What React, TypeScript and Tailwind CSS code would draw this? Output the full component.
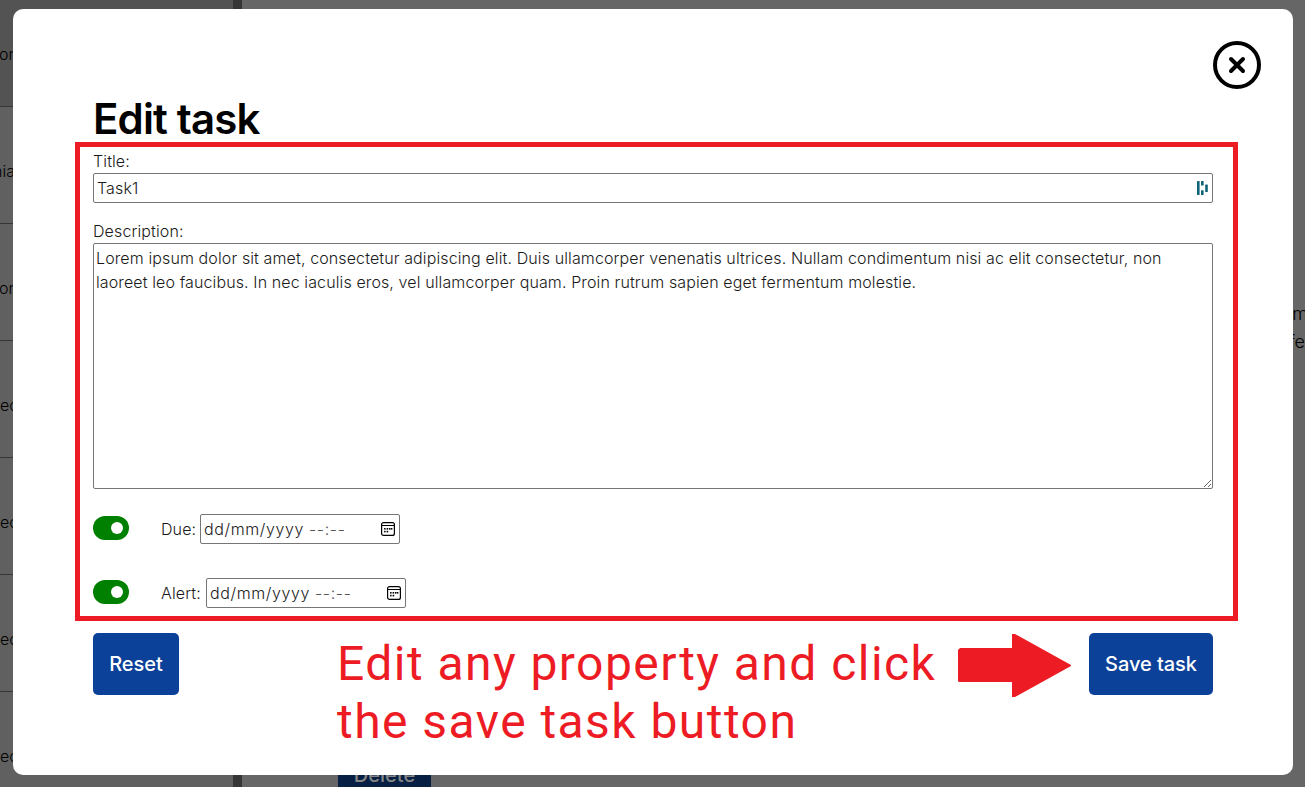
import React from "react";

const sidebarItems = ["on", "nia", "on", "ec", "ec", "ec", "ec"];

function Backdrop() {
  return (
    <div className="flex h-full w-full overflow-hidden bg-[#666666]">
      <div className="-mt-[10px] flex w-[233px] shrink-0 flex-col">
        {sidebarItems.map((text, i) => (
          <div
            key={i}
            className={
              "flex h-[117px] shrink-0 items-center border-b border-[#363636] pt-[11px] text-base font-light text-black " +
              (i === 0 ? "bg-[#535353]" : "bg-[#606060]")
            }
          >
            <span className={i === 1 ? "-ml-[7px]" : i === 0 || i === 2 ? "-ml-[1px]" : "ml-0"}>{text}</span>
          </div>
        ))}
      </div>
      <div className="w-[9px] shrink-0 bg-[#363636]" />
      <div className="flex min-w-0 flex-1 flex-col justify-between">
        <div className="mt-[300px] flex flex-col items-end text-[18px] leading-7 font-light whitespace-nowrap text-black">
          <span className="-mr-[3px]">m</span>
          <span>fe</span>
        </div>
        <div className="-mb-[19px] ml-24 flex h-[62px] w-[93px] items-center justify-center rounded bg-[#061f43] text-xl font-medium text-[#858585]">
          Delete
        </div>
      </div>
    </div>
  );
}

function CloseIcon() {
  return (
    <svg width="48" height="48" viewBox="0 0 48 48" fill="none" stroke="#000">
      <circle cx="24" cy="24" r="22" strokeWidth="4" />
      <path d="M18 18L30 30M30 18L18 30" strokeWidth="4" strokeLinecap="round" />
    </svg>
  );
}

function PasswordManagerIcon() {
  return (
    <svg width="12" height="16" viewBox="0 0 12 16" fill="#0e6377">
      <rect x="0" y="1" width="2.6" height="14" rx=".4" />
      <rect x="4" y="1" width="2.6" height="4.6" rx=".6" />
      <rect x="4" y="10.2" width="2.6" height="4.8" rx=".6" />
      <rect x="8.2" y="4.6" width="2.6" height="7.4" rx=".6" />
    </svg>
  );
}

function CalendarIcon() {
  return (
    <svg width="14" height="14" viewBox="0 0 14 14" fill="none" stroke="#000">
      <rect x=".6" y=".6" width="12.8" height="12.8" rx="2" strokeWidth="1.2" />
      <path d="M1 3.5H13" />
      <g fill="#000" stroke="none">
        <rect x="5.6" y="6" width="1.6" height="1.6" />
        <rect x="8" y="6" width="1.6" height="1.6" />
        <rect x="10" y="6" width="1.4" height="1.6" />
        <rect x="3.1" y="6" width="1.5" height="1.6" />
        <rect x="3.1" y="8.8" width="1.5" height="1.6" />
        <rect x="5.6" y="8.8" width="1.6" height="1.6" />
      </g>
    </svg>
  );
}

function Toggle() {
  return (
    <div className="flex h-6 w-9 items-center justify-end rounded-full bg-[#008000] pr-1.5">
      <div className="size-3 rounded-full bg-white" />
    </div>
  );
}

function DateRow({ label, gap }: { label: string; gap: string }) {
  return (
    <div className="flex h-[30px] items-center">
      <div className="-mt-0.5 mr-8">
        <Toggle />
      </div>
      <span className={gap}>{label}</span>
      <div className="flex h-[30px] w-[200px] items-center justify-between rounded-[2px] border border-[#767676] pr-1 pl-[3px]">
        <span className="tracking-[0.6px] whitespace-pre">
          dd/mm/yyyy <span className="text-[#555]">--:--</span>
        </span>
        <CalendarIcon />
      </div>
    </div>
  );
}

const buttonClass =
  "flex h-[62px] items-center justify-center rounded-[5px] bg-[#0c419a] text-xl tracking-[-0.05px] font-medium text-white";

export default function App() {
  return (
    <div className="relative h-[787px] w-[1305px] overflow-hidden font-['Inter',sans-serif]">
      <Backdrop />

      <div className="absolute top-[9px] left-[13px] flex h-[766px] w-[1280px] flex-col rounded-[10px] bg-white px-20 pt-8 text-base leading-6 font-light tracking-[0.115px] text-[#1a1a1a]">
        <div className="-mr-12 flex h-12 justify-end">
          <CloseIcon />
        </div>
        <h1 className="flex h-[60px] items-center text-[42px] leading-[60px] font-semibold tracking-[-0.85px] text-black">
          Edit task
        </h1>
        <label className="flex h-6 items-center">Title:</label>
        <div className="flex h-[30px] items-center justify-between rounded-[2px] border border-[#767676] pr-[3px] pl-[3px]">
          <span>Task1</span>
          <PasswordManagerIcon />
        </div>
        <label className="mt-4 flex h-6 items-center">Description:</label>
        <textarea
          className="h-[246px] w-full shrink-0 rounded-[2px] border border-[#767676] p-0.5 leading-6 tracking-[0.115px] outline-none"
          defaultValue="Lorem ipsum dolor sit amet, consectetur adipiscing elit. Duis ullamcorper venenatis ultrices. Nullam condimentum nisi ac elit consectetur, non laoreet leo faucibus. In nec iaculis eros, vel ullamcorper quam. Proin rutrum sapien eget fermentum molestie."
        />
        <div className="mt-[25px] flex flex-col gap-[34px]">
          <DateRow label="Due:" gap="w-[39px]" />
          <DateRow label="Alert:" gap="w-[45px]" />
        </div>
        <div className="mt-[25px] flex justify-between">
          <button className={buttonClass + " w-[86px]"}>Reset</button>
          <button className={buttonClass + " w-[124px]"}>Save task</button>
        </div>
      </div>

      <div className="pointer-events-none absolute top-[142px] left-[75px] h-[479px] w-[1163px] border-[5px] border-[#ed1c24]" />
      <div className="pointer-events-none absolute top-[635px] left-[337px] font-['Roboto',sans-serif] text-[48px] leading-[58px] tracking-[1.45px] whitespace-nowrap text-[#ed1c24]">
        <div>Edit any property and click</div>
        <div>the save task button</div>
      </div>
      <svg className="pointer-events-none absolute top-[634px] left-[958px]" width="114" height="64" viewBox="0 0 114 64" fill="#ed1c24">
        <path d="M2 14H54V0H57L113 31V32L57 63H54V48H1L0 47V16Z" />
      </svg>
    </div>
  );
}
